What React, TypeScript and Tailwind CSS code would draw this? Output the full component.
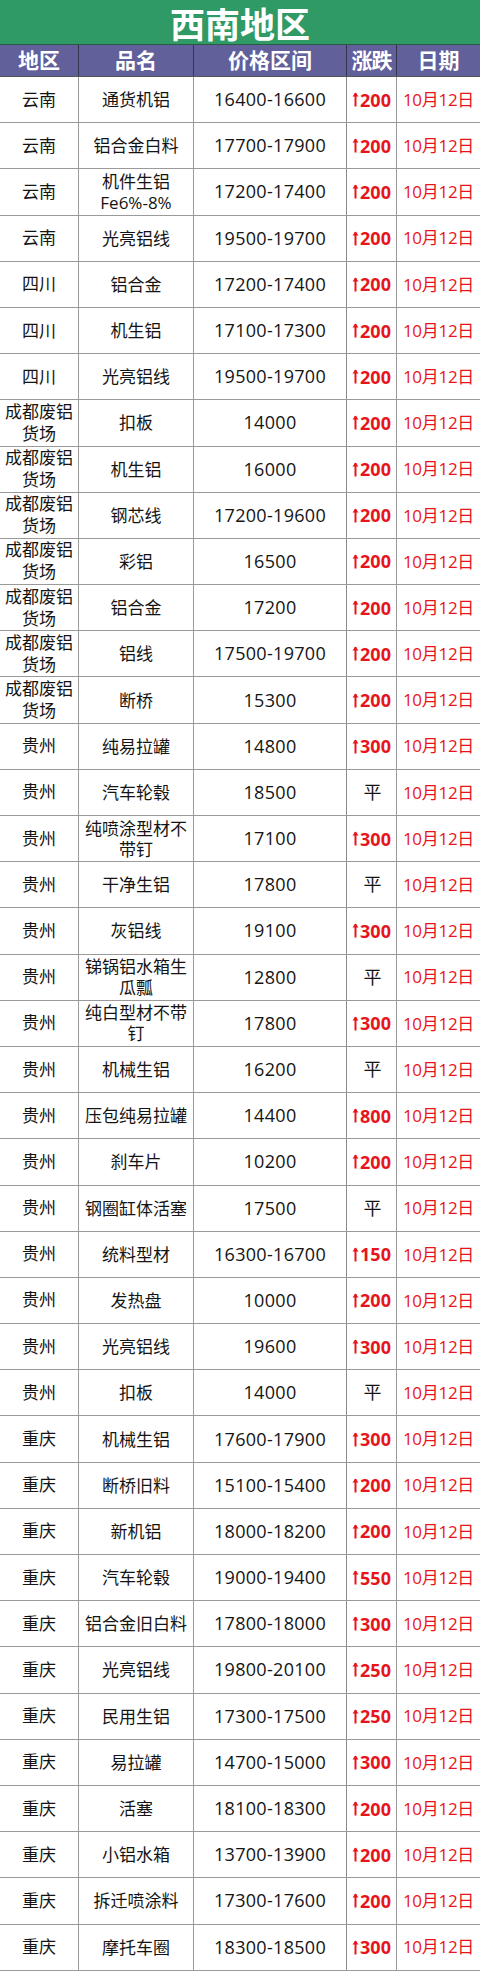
import React from "react";

type Row = { region: string; name: string; price: string; change: string };

const rows: Row[] = [
  { region: "云南", name: "通货机铝", price: "16400-16600", change: "200" },
  { region: "云南", name: "铝合金白料", price: "17700-17900", change: "200" },
  { region: "云南", name: "机件生铝\nFe6%-8%", price: "17200-17400", change: "200" },
  { region: "云南", name: "光亮铝线", price: "19500-19700", change: "200" },
  { region: "四川", name: "铝合金", price: "17200-17400", change: "200" },
  { region: "四川", name: "机生铝", price: "17100-17300", change: "200" },
  { region: "四川", name: "光亮铝线", price: "19500-19700", change: "200" },
  { region: "成都废铝\n货场", name: "扣板", price: "14000", change: "200" },
  { region: "成都废铝\n货场", name: "机生铝", price: "16000", change: "200" },
  { region: "成都废铝\n货场", name: "钢芯线", price: "17200-19600", change: "200" },
  { region: "成都废铝\n货场", name: "彩铝", price: "16500", change: "200" },
  { region: "成都废铝\n货场", name: "铝合金", price: "17200", change: "200" },
  { region: "成都废铝\n货场", name: "铝线", price: "17500-19700", change: "200" },
  { region: "成都废铝\n货场", name: "断桥", price: "15300", change: "200" },
  { region: "贵州", name: "纯易拉罐", price: "14800", change: "300" },
  { region: "贵州", name: "汽车轮毂", price: "18500", change: "平" },
  { region: "贵州", name: "纯喷涂型材不\n带钉", price: "17100", change: "300" },
  { region: "贵州", name: "干净生铝", price: "17800", change: "平" },
  { region: "贵州", name: "灰铝线", price: "19100", change: "300" },
  { region: "贵州", name: "锑锅铝水箱生\n瓜瓢", price: "12800", change: "平" },
  { region: "贵州", name: "纯白型材不带\n钉", price: "17800", change: "300" },
  { region: "贵州", name: "机械生铝", price: "16200", change: "平" },
  { region: "贵州", name: "压包纯易拉罐", price: "14400", change: "800" },
  { region: "贵州", name: "刹车片", price: "10200", change: "200" },
  { region: "贵州", name: "钢圈缸体活塞", price: "17500", change: "平" },
  { region: "贵州", name: "统料型材", price: "16300-16700", change: "150" },
  { region: "贵州", name: "发热盘", price: "10000", change: "200" },
  { region: "贵州", name: "光亮铝线", price: "19600", change: "300" },
  { region: "贵州", name: "扣板", price: "14000", change: "平" },
  { region: "重庆", name: "机械生铝", price: "17600-17900", change: "300" },
  { region: "重庆", name: "断桥旧料", price: "15100-15400", change: "200" },
  { region: "重庆", name: "新机铝", price: "18000-18200", change: "200" },
  { region: "重庆", name: "汽车轮毂", price: "19000-19400", change: "550" },
  { region: "重庆", name: "铝合金旧白料", price: "17800-18000", change: "300" },
  { region: "重庆", name: "光亮铝线", price: "19800-20100", change: "250" },
  { region: "重庆", name: "民用生铝", price: "17300-17500", change: "250" },
  { region: "重庆", name: "易拉罐", price: "14700-15000", change: "300" },
  { region: "重庆", name: "活塞", price: "18100-18300", change: "200" },
  { region: "重庆", name: "小铝水箱", price: "13700-13900", change: "200" },
  { region: "重庆", name: "拆迁喷涂料", price: "17300-17600", change: "200" },
  { region: "重庆", name: "摩托车圈", price: "18300-18500", change: "300" },
];

const font = { fontFamily: '"Open Sans", "Noto Sans CJK SC", sans-serif' };

const UpArrow = () => (
  <svg width="7" height="15" viewBox="0 0 7 15" className="mr-[1px] inline-block">
    <path d="M3.5 1 L3.5 14.5" stroke="#e8141b" strokeWidth="2" fill="none" />
    <path d="M0.5 4.5 L3.5 0.5 L6.5 4.5 Z" fill="#e8141b" />
  </svg>
);

// multi-line cells use "\n" in the data
const Lines = ({ text }: { text: string }) => (
  <>
    {text.split("\n").map((line, i) => (
      <span key={i} className="block">
        {line}
      </span>
    ))}
  </>
);

const cols = "grid grid-cols-[79px_115px_153px_50px_83px]";

export default function App() {
  return (
    <div className="w-[480px] bg-white" style={font}>
      {/* Title */}
      <div className="flex h-[45px] items-center justify-center border-b border-[#2a5a44] bg-[#2f9a65]">
        <span className="text-[35px] font-bold leading-none text-white [font-family:'Noto_Sans_CJK_SC',sans-serif]">
          西南地区
        </span>
      </div>

      {/* Header */}
      <div className={`${cols} h-[31px] bg-[#61609b] text-[21px] font-bold text-white`}>
        {["地区", "品名", "价格区间", "涨跌", "日期"].map((h, i) => (
          <div
            key={h}
            className={`flex items-center justify-center leading-none ${i < 4 ? "border-r border-[#34344f]" : ""} ${i === 3 ? "tracking-[-1px]" : ""}`}
          >
            {h}
          </div>
        ))}
      </div>

      {/* Body */}
      <div className="border-t border-[#555]">
        {rows.map((r, idx) => (
          <div
            key={idx}
            className={`${cols} h-[46.2px] border-b border-[#9a9a9a] text-[17px] text-[#141414]`}
          >
            <div className="flex items-center justify-center border-r border-[#9a9a9a] text-center leading-[22px]">
              <div>
                <Lines text={r.region} />
              </div>
            </div>
            <div className="flex items-center justify-center border-r border-[#9a9a9a] px-1 text-center leading-[21px]">
              <div>
                <Lines text={r.name} />
              </div>
            </div>
            <div className="flex items-center justify-center border-r border-[#8a8a8a] text-[18px] tracking-[0.3px]">
              {r.price}
            </div>
            <div className="flex items-center justify-center border-r border-[#9a9a9a]">
              {r.change === "平" ? (
                <span className="pl-[2px] text-[18px] text-[#141414]">平</span>
              ) : (
                <span className="flex items-center text-[18px] font-bold leading-none text-[#e8141b]">
                  <UpArrow />
                  {r.change}
                </span>
              )}
            </div>
            <div className="flex items-center justify-center text-[17px] tracking-[-0.3px] text-[#e8141b]">
              10月12日
            </div>
          </div>
        ))}
      </div>
    </div>
  );
}
